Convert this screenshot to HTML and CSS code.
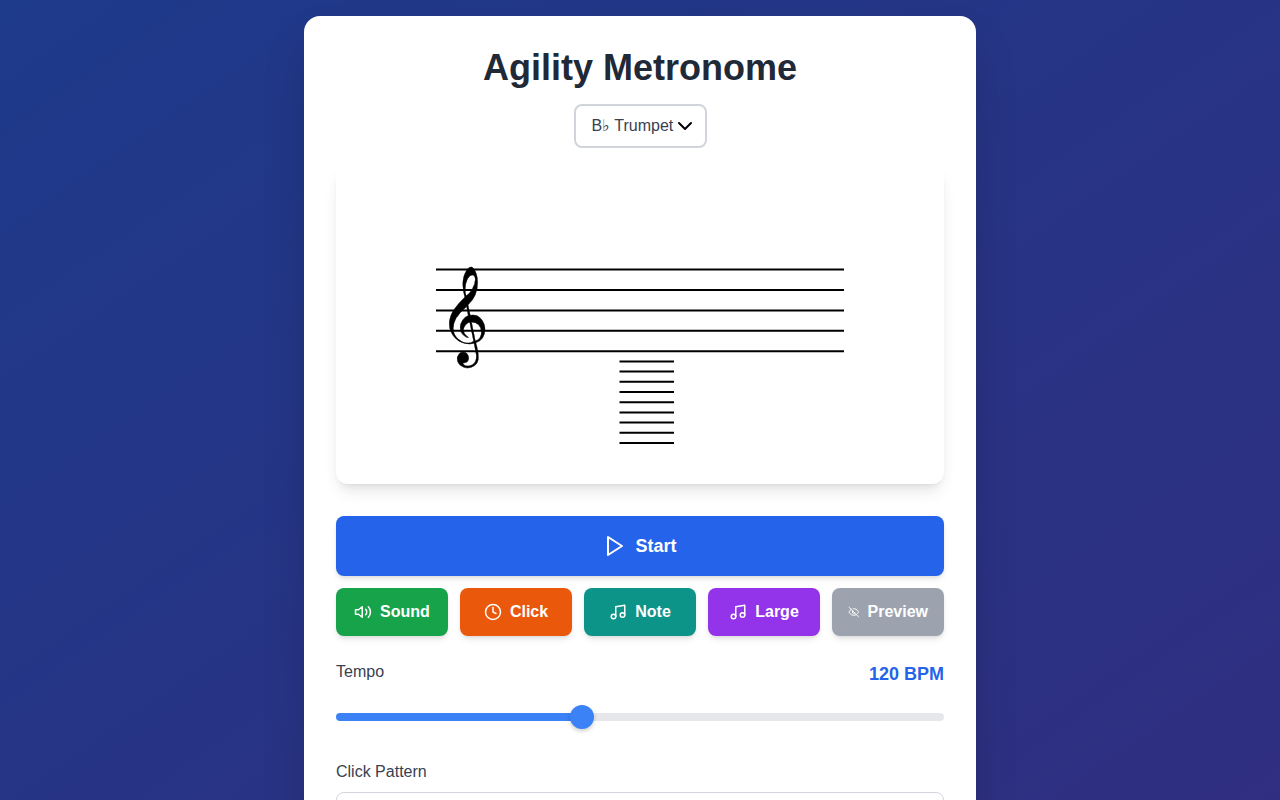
FILE: index.html
```html
<!DOCTYPE html>
<html lang="en">
<head>
<meta charset="utf-8">
<meta name="viewport" content="width=device-width, initial-scale=1">
<title>Agility Metronome</title>
<link rel="stylesheet" href="styles.css">
</head>
<body>
<main class="page">
  <div class="card">
    <header class="header">
      <h1 class="title">Agility Metronome</h1>
      <div class="select-wrap">
        <select class="instrument" aria-label="Instrument">
          <option>B♭ Trumpet</option>
        </select>
        <svg class="chevron" viewBox="0 0 16 16" aria-hidden="true"><path d="M2 5l6 6 6-6"/></svg>
      </div>
    </header>

    <div class="staff-panel">
      <svg class="staff" viewBox="0 0 608 320" role="img" aria-label="Treble staff">
        <g stroke="#000" stroke-width="2">
          <path d="M100 105.4H508M100 126H508M100 146.4H508M100 166.8H508M100 187.2H508"/>
          <path d="M283.5 197.4H338M283.5 207.6H338M283.5 217.8H338M283.5 228H338M283.5 238.2H338M283.5 248.4H338M283.5 258.6H338M283.5 268.8H338M283.5 279H338"/>
        </g>
        <text class="clef" x="103" y="179">𝄞</text>
      </svg>
    </div>

    <div class="controls">
      <button class="btn btn-start" type="button">
        <svg class="icon icon-lg" viewBox="0 0 24 24" aria-hidden="true"><polygon points="5 3 19 12 5 21 5 3"/></svg>
        Start
      </button>
      <div class="toggles">
        <button class="btn btn-green" type="button">
          <svg class="icon" viewBox="0 0 24 24" aria-hidden="true"><polygon points="11 5 6 9 2 9 2 15 6 15 11 19 11 5"/><path d="M15.54 8.46a5 5 0 0 1 0 7.07"/><path d="M19.07 4.93a10 10 0 0 1 0 14.14"/></svg>
          Sound
        </button>
        <button class="btn btn-orange" type="button">
          <svg class="icon" viewBox="0 0 24 24" aria-hidden="true"><circle cx="12" cy="12" r="10"/><polyline points="12 6 12 12 16 14"/></svg>
          Click
        </button>
        <button class="btn btn-teal" type="button">
          <svg class="icon" viewBox="0 0 24 24" aria-hidden="true"><path d="M9 18V5l12-2v13"/><circle cx="6" cy="18" r="3"/><circle cx="18" cy="16" r="3"/></svg>
          Note
        </button>
        <button class="btn btn-purple" type="button">
          <svg class="icon" viewBox="0 0 24 24" aria-hidden="true"><path d="M9 18V5l12-2v13"/><circle cx="6" cy="18" r="3"/><circle cx="18" cy="16" r="3"/></svg>
          Large
        </button>
        <button class="btn btn-gray" type="button">
          <svg class="icon" viewBox="0 0 24 24" aria-hidden="true"><path d="M9.88 9.88a3 3 0 1 0 4.24 4.24"/><path d="M10.73 5.08A10.43 10.43 0 0 1 12 5c7 0 10 7 10 7a13.16 13.16 0 0 1-1.67 2.68"/><path d="M6.61 6.61A13.526 13.526 0 0 0 2 12s3 7 10 7a9.74 9.74 0 0 0 5.39-1.61"/><path d="M2 2l20 20"/></svg>
          Preview
        </button>
      </div>
    </div>

    <div class="tempo">
      <div class="tempo-head">
        <label class="label" for="tempo">Tempo</label>
        <output class="bpm" for="tempo">120 BPM</output>
      </div>
      <input class="slider" id="tempo" type="range" min="40" max="240" value="120">
    </div>

    <div class="field">
      <label class="label" for="pattern">Click Pattern</label>
      <select class="pattern" id="pattern"></select>
    </div>
  </div>
</main>
</body>
</html>
```

FILE: styles.css
```css
*, *::before, *::after { box-sizing: border-box; }

body {
  margin: 0;
  font-family: "Liberation Sans", Arial, sans-serif;
  font-size: 16px;
  line-height: 24px;
  color: #374151;
}

button, select, input { font: inherit; color: inherit; margin: 0; }

.page {
  min-height: 100vh;
  padding: 16px;
  background: linear-gradient(to bottom right, #1e3a8a, #312e81);
}

.card {
  max-width: 672px;
  margin: 0 auto;
  padding: 32px;
  background: #fff;
  border-radius: 16px;
  box-shadow: 0 25px 50px -12px rgba(0, 0, 0, 0.25);
}

.header {
  display: flex;
  flex-direction: column;
  align-items: center;
  gap: 16px;
  margin-bottom: 16px;
}

.title {
  margin: 0;
  font-size: 36px;
  line-height: 40px;
  font-weight: 700;
  color: #1f2937;
}

.select-wrap { position: relative; }

.instrument {
  display: block;
  appearance: none;
  padding: 8px 30px 8px 16px;
  border: 2px solid #d1d5db;
  border-radius: 8px;
  background: #fff;
}

.chevron {
  position: absolute;
  top: 14px;
  right: 14px;
  width: 16px;
  height: 16px;
  fill: none;
  stroke: #000;
  stroke-width: 2;
  stroke-linecap: round;
  stroke-linejoin: round;
  pointer-events: none;
}

.staff-panel {
  margin-bottom: 32px;
  border-radius: 12px;
  background: #fff;
  box-shadow: 0 10px 15px -3px rgba(0, 0, 0, 0.1), 0 4px 6px -4px rgba(0, 0, 0, 0.1);
}

.staff { display: block; width: 100%; }

.clef {
  font-size: 85px;
  fill: #000;
  stroke: #000;
  stroke-width: 0.3;
}

.controls {
  display: flex;
  flex-direction: column;
  gap: 12px;
  margin-bottom: 24px;
}

.toggles {
  display: grid;
  grid-template-columns: repeat(5, minmax(0, 1fr));
  gap: 12px;
}

.btn {
  display: flex;
  align-items: center;
  justify-content: center;
  gap: 8px;
  padding: 12px 16px;
  border: 0;
  border-radius: 8px;
  font-weight: 700;
  color: #fff;
  box-shadow: 0 4px 6px -1px rgba(0, 0, 0, 0.1), 0 2px 4px -2px rgba(0, 0, 0, 0.1);
}

.btn-start {
  padding: 16px 24px;
  font-size: 18px;
  line-height: 28px;
  background: #2563eb;
}

.btn-green { background: #16a34a; }
.btn-orange { background: #ea580c; }
.btn-teal { background: #0d9488; }
.btn-purple { background: #9333ea; }
.btn-gray { background: #9ca3af; }

.icon {
  width: 18px;
  height: 18px;
  fill: none;
  stroke: currentColor;
  stroke-width: 2;
  stroke-linecap: round;
  stroke-linejoin: round;
}

.icon-lg { width: 24px; height: 24px; }

.tempo { margin-bottom: 30px; }

.tempo-head {
  display: flex;
  justify-content: space-between;
  margin-bottom: 16px;
}

.bpm {
  font-size: 18px;
  line-height: 28px;
  font-weight: 700;
  color: #2563eb;
}

.slider {
  display: block;
  width: 100%;
  height: 26px;
  appearance: none;
  background: transparent;
}

.slider::-webkit-slider-runnable-track {
  height: 8px;
  border-radius: 4px;
  background: linear-gradient(to right, #3b82f6 40%, #e5e7eb 40%);
}

.slider::-webkit-slider-thumb {
  appearance: none;
  width: 24px;
  height: 24px;
  margin-top: -8px;
  border-radius: 50%;
  background: #3b82f6;
  box-shadow: 0 2px 4px rgba(0, 0, 0, 0.2);
}

.field {
  display: flex;
  flex-direction: column;
  gap: 8px;
}

.pattern {
  width: 100%;
  height: 50px;
  padding: 12px 16px;
  border: 1px solid #d1d5db;
  border-radius: 8px;
  background: #fff;
}
```
